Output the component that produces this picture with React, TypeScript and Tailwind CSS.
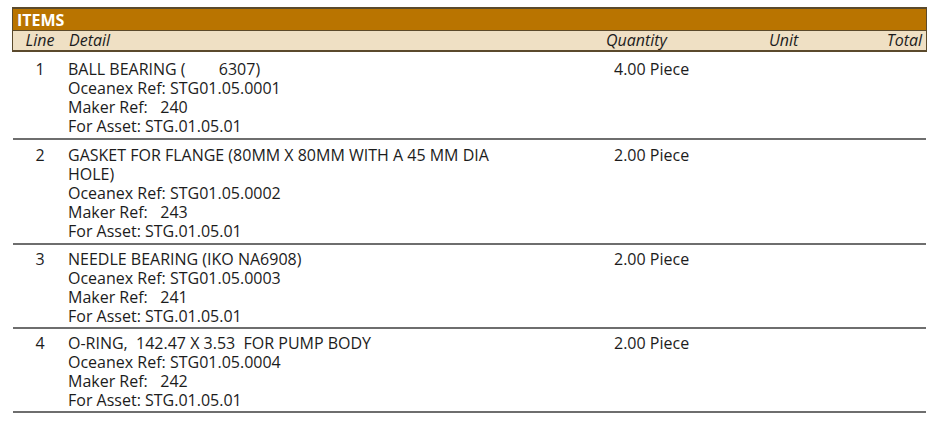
import React from 'react';

interface Item {
  line: number;
  detail: string[];
  qty: string;
}

const items: Item[] = [
  {
    line: 1,
    detail: ['BALL BEARING (        6307)', 'Oceanex Ref: STG01.05.0001', 'Maker Ref:   240', 'For Asset: STG.01.05.01'],
    qty: '4.00',
  },
  {
    line: 2,
    detail: [
      'GASKET FOR FLANGE (80MM X 80MM WITH A 45 MM DIA',
      'HOLE)',
      'Oceanex Ref: STG01.05.0002',
      'Maker Ref:   243',
      'For Asset: STG.01.05.01',
    ],
    qty: '2.00',
  },
  {
    line: 3,
    detail: ['NEEDLE BEARING (IKO NA6908)', 'Oceanex Ref: STG01.05.0003', 'Maker Ref:   241', 'For Asset: STG.01.05.01'],
    qty: '2.00',
  },
  {
    line: 4,
    detail: ['O-RING,  142.47 X 3.53  FOR PUMP BODY', 'Oceanex Ref: STG01.05.0004', 'Maker Ref:   242', 'For Asset: STG.01.05.01'],
    qty: '2.00',
  },
];

const cols = 'grid grid-cols-[50px_537px_160px_100px_1fr]';

export default function App() {
  return (
    <div className="w-[950px] h-[422px] bg-white pt-[7px] pl-[12px] font-['Open_Sans',sans-serif] text-[#1c1c1c]">
      <div className="w-[915px]">
        <div className="border-x border-t-2 border-[#5b4a2c]">
          <div className="h-[21px] bg-[#b97400] pl-[4px] text-[16px] leading-[22px] font-bold text-white">ITEMS</div>
          <div className={`${cols} h-[22px] bg-[#efe0c4] border-t border-b-2 border-[#5b4a2c] text-[16px] leading-[19px] italic`}>
            <div className="text-center pl-[4px]">Line</div>
            <div className="pl-[6px]">Detail</div>
            <div className="pl-[6px]">Quantity</div>
            <div className="pl-[9px]">Unit</div>
            <div className="text-right pr-[4px]">Total</div>
          </div>
        </div>
        {items.map((it, i) => (
          <div
            key={it.line}
            className={`${cols} border-b-2 border-[#6e6e6e] text-[16px] leading-[19px] whitespace-pre ${i === 0 ? 'pt-[8px] pb-[2px]' : i === 1 ? 'pt-[6px] pb-[2px]' : 'pt-[5px] pb-[1px]'} ml-[1px] mr-[1px]`}
          >
            <div className="text-center pl-[4px]">{it.line}</div>
            <div className="pl-[5px]">
              {it.detail.map((d) => (
                <div key={d}>{d}</div>
              ))}
            </div>
            <div className="pl-[14px]">{it.qty} Piece</div>
            <div />
            <div />
          </div>
        ))}
      </div>
    </div>
  );
}
